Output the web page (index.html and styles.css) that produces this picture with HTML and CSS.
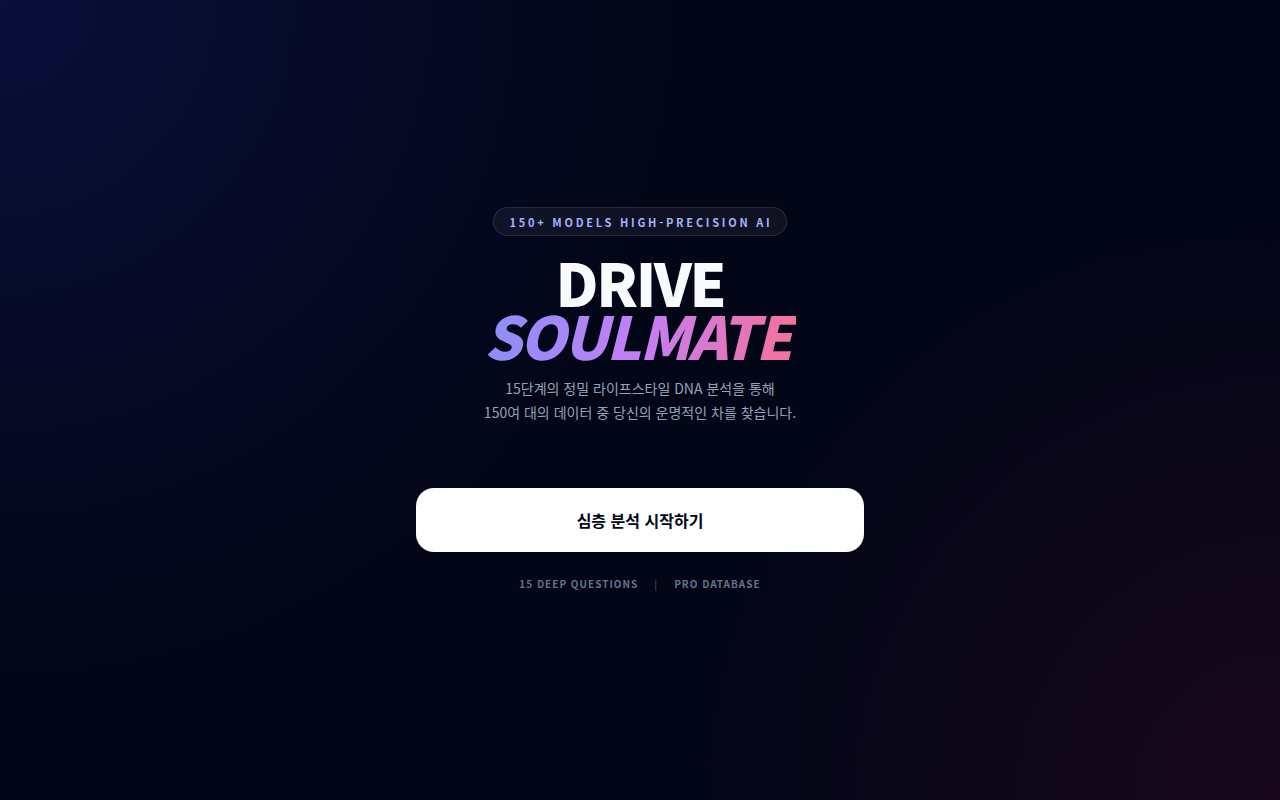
FILE: index.html
```html
<!DOCTYPE html>
<html lang="ko">
<head>
<meta charset="utf-8">
<title>Drive Soulmate</title>
<link rel="stylesheet" href="styles.css">
</head>
<body>
<main class="hero">
  <div class="badge">150+ MODELS HIGH-PRECISION AI</div>
  <h1 class="title">
    <span class="line1">DRIVE</span>
    <span class="line2">SOULMATE</span>
  </h1>
  <p class="desc">15단계의 정밀 라이프스타일 DNA 분석을 통해<br>150여 대의 데이터 중 당신의 운명적인 차를 찾습니다.</p>
  <button class="cta">심층 분석 시작하기</button>
  <div class="meta">
    <span>15 DEEP QUESTIONS</span>
    <span class="sep">|</span>
    <span>PRO DATABASE</span>
  </div>
</main>
</body>
</html>
```

FILE: styles.css
```css
* { box-sizing: border-box; }
html, body { margin: 0; padding: 0; }
body {
  width: 1280px;
  height: 800px;
  overflow: hidden;
  font-family: "Noto Sans CJK KR", "Noto Sans", sans-serif;
  background-color: #020617;
  background-image:
    radial-gradient(circle at 0 0, rgba(30, 35, 140, 0.30) 0%, rgba(30, 35, 140, 0.12) 25%, rgba(30, 35, 140, 0) 45%),
    radial-gradient(circle at 100% 100%, rgba(90, 10, 40, 0.26) 0%, rgba(90, 10, 40, 0.1) 22%, rgba(90, 10, 40, 0) 40%);
}
.hero {
  height: 800px;
  display: flex;
  flex-direction: column;
  align-items: center;
  justify-content: center;
  padding-bottom: 2px;
}
.badge {
  height: 29px;
  padding: 0 14px 0 16px;
  display: flex;
  align-items: center;
  border-radius: 999px;
  background: rgba(255, 255, 255, 0.05);
  border: 1px solid rgba(255, 255, 255, 0.1);
  color: #a5b4fc;
  font-size: 11px;
  font-weight: 700;
  letter-spacing: 0.25em;
}
.title {
  margin: 19px 0 0;
  display: flex;
  flex-direction: column;
  align-items: center;
  font-size: 59px;
  font-weight: 900;
  line-height: 53px;
  letter-spacing: -0.04em;
}
.line1 { color: #f8fafc; }
.line2 {
  font-style: italic;
  background: linear-gradient(90deg, #8b8ff8 0%, #c47ef5 50%, #f4729a 100%);
  -webkit-background-clip: text;
  background-clip: text;
  color: transparent;
  padding-right: 6px;
}
.desc {
  margin: 15px 0 0;
  text-align: center;
  color: #94a3b8;
  font-size: 14px;
  line-height: 24px;
  font-weight: 400;
}
.cta {
  margin-top: 64px;
  width: 448px;
  height: 64px;
  border: none;
  border-radius: 18px;
  background: #ffffff;
  color: #020617;
  font-family: inherit;
  font-size: 16px;
  font-weight: 700;
}
.meta {
  margin-top: 24px;
  display: flex;
  gap: 16px;
  color: #64748b;
  font-size: 10px;
  font-weight: 700;
  letter-spacing: 0.1em;
}
.meta .sep { color: #334155; }
```
